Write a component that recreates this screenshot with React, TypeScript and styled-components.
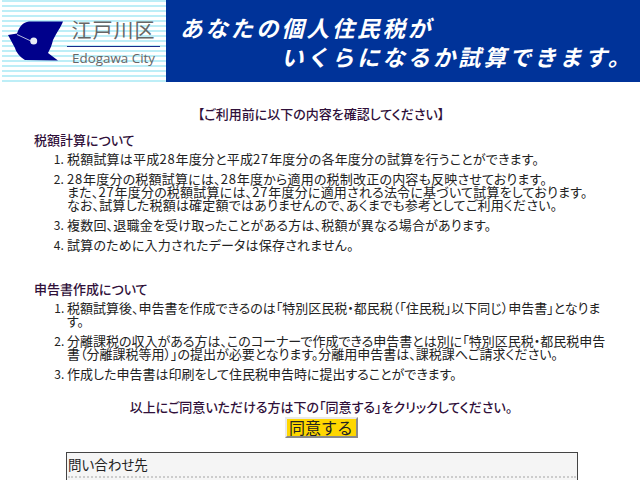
import styled, { createGlobalStyle } from 'styled-components';

const GlobalStyle = createGlobalStyle`
  html, body {
    margin: 0;
    height: 480px;
    overflow: hidden;
    background: #fff;
  }
  body {
    font-family: "Noto Sans CJK JP", "Liberation Sans", sans-serif;
    font-size: 13px;
    font-feature-settings: "palt";
    color: #222;
  }
`;

const Header = styled.header`
  display: flex;
  height: 82px;
  padding-left: 2px;
`;

const LogoPanel = styled.div`
  width: 164px;
  display: flex;
  align-items: center;
  background: repeating-linear-gradient(#bdeef7 0 2px, #ffffff 2px 5px);
`;

const CityName = styled.div`
  width: 93px;
  margin-left: 3px;
  margin-top: 2px;
  text-align: center;
`;

const CityKanji = styled.div`
  font-size: 20px;
  line-height: 28px;
  letter-spacing: 1px;
  font-feature-settings: normal;
  color: #666;
  border-bottom: 1px solid #1a2a8c;
  padding-bottom: 2px;
`;

const CityRoman = styled.div`
  font-family: "Open Sans", sans-serif;
  font-size: 13.4px;
  line-height: 22px;
  color: #666;
  white-space: nowrap;
`;

const Banner = styled.div`
  flex: 1;
  background: #003399;
  color: #fff;
  font-size: 22.5px;
  font-weight: 700;
  font-style: italic;
  font-feature-settings: normal;
  line-height: 29px;
  letter-spacing: 2.8px;
  padding: 13px 0 0 14px;
  white-space: nowrap;
`;

const BannerLine = styled.div<{ $indent?: number }>`
  margin-left: ${(p) => p.$indent ?? 0}px;
`;

const Main = styled.main`
  padding: 24px 32px 0 34px;
`;

const Notice = styled.p`
  margin: 0 0 9px;
  text-align: center;
  font-weight: 500;
  line-height: 16px;
  color: #30103a;
`;

const SectionTitle = styled.h3<{ $gap?: number }>`
  margin: ${(p) => p.$gap ?? 0}px 0 3px;
  font-size: 13px;
  font-weight: 500;
  line-height: 18px;
  color: #30103a;
`;

const Steps = styled.ol<{ $tracking?: number }>`
  margin: 0;
  padding: 0 0 0 33px;
  letter-spacing: ${(p) => p.$tracking ?? 0}px;
`;

const Step = styled.li`
  line-height: 13px;
  padding-bottom: 7px;
  &::marker {
    font-size: 12px;
  }
`;

const Num = styled.span`
  letter-spacing: 0.8px;
`;

const Agree = styled.div`
  margin: 11px 0 0;
  text-align: center;
`;

const AgreeText = styled.p`
  margin: 0 0 1px;
  font-weight: 500;
  line-height: 18px;
  color: #30103a;
`;

const AgreeButton = styled.button`
  display: block;
  margin: 0 auto;
  width: 73px;
  height: 21px;
  padding: 0;
  background: #ffd700;
  border: 2px solid;
  border-color: #e8e8e8 #8a8a8a #8a8a8a #e8e8e8;
  font-family: inherit;
  font-size: 16px;
  line-height: 17px;
  color: #222;
`;

const ContactBox = styled.section`
  margin: 14px 30px 0 32px;
  height: 60px;
  padding: 2px 1px;
  background: #f5f5f5;
  border: 1px solid #444;
`;

const ContactTitle = styled.div`
  font-size: 13.5px;
  line-height: 18px;
  padding-bottom: 3px;
  border-bottom: 2px dotted #ccc;
`;

const LogoMark = styled.svg`
  margin-left: 5px;
  flex: none;
`;

const Logo = () => (
  <LogoMark width="57" height="42" viewBox="7 20 57 42">
    <path
      d="M8 35 L17 33.5 C19 27 23 22 29 21.5 L63 21.5 C61 27 57 32 53 40 C52 45 50 49 48 53 L58 60.5 L25 60 C20 57 16 52 15 48 Z"
      fill="#00008b"
    />
    <path d="M17 34.5 L32 41.5" stroke="#c8d0e8" strokeWidth="0.9" fill="none" />
    <circle cx="33.7" cy="41" r="3.5" fill="#e8ecf6" />
  </LogoMark>
);

export default function App() {
  return (
    <>
      <GlobalStyle />
      <Header>
        <LogoPanel>
          <Logo />
          <CityName>
            <CityKanji>江戸川区</CityKanji>
            <CityRoman>Edogawa City</CityRoman>
          </CityName>
        </LogoPanel>
        <Banner>
          <BannerLine>あなたの個人住民税が</BannerLine>
          <BannerLine $indent={101}>いくらになるか試算できます。</BannerLine>
        </Banner>
      </Header>
      <Main>
        <Notice>【ご利用前に以下の内容を確認してください】</Notice>
        <SectionTitle>税額計算について</SectionTitle>
        <Steps $tracking={0.2}>
          <Step>税額試算は平成<Num>28</Num>年度分と平成<Num>27</Num>年度分の各年度分の試算を行うことができます。</Step>
          <Step>
            <Num>28</Num>年度分の税額試算には、<Num>28</Num>年度から適用の税制改正の内容も反映させております。
            <br />
            また、<Num>27</Num>年度分の税額試算には、<Num>27</Num>年度分に適用される法令に基づいて試算をしております。
            <br />
            なお、試算した税額は確定額ではありませんので、あくまでも参考としてご利用ください。
          </Step>
          <Step>複数回、退職金を受け取ったことがある方は、税額が異なる場合があります。</Step>
          <Step>試算のために入力されたデータは保存されません。</Step>
        </Steps>
        <SectionTitle $gap={22}>申告書作成について</SectionTitle>
        <Steps>
          <Step>税額試算後、申告書を作成できるのは「特別区民税・都民税（「住民税」以下同じ）申告書」となります。</Step>
          <Step>
            分離課税の収入がある方は、このコーナーで作成できる申告書とは別に「特別区民税・都民税申告書（分離課税等用）」の提出が必要となります。分離用申告書は、課税課へご請求ください。
          </Step>
          <Step>作成した申告書は印刷をして住民税申告時に提出することができます。</Step>
        </Steps>
        <Agree>
          <AgreeText>以上にご同意いただける方は下の「同意する」をクリックしてください。</AgreeText>
          <AgreeButton>同意する</AgreeButton>
        </Agree>
        <ContactBox>
          <ContactTitle>問い合わせ先</ContactTitle>
        </ContactBox>
      </Main>
    </>
  );
}
